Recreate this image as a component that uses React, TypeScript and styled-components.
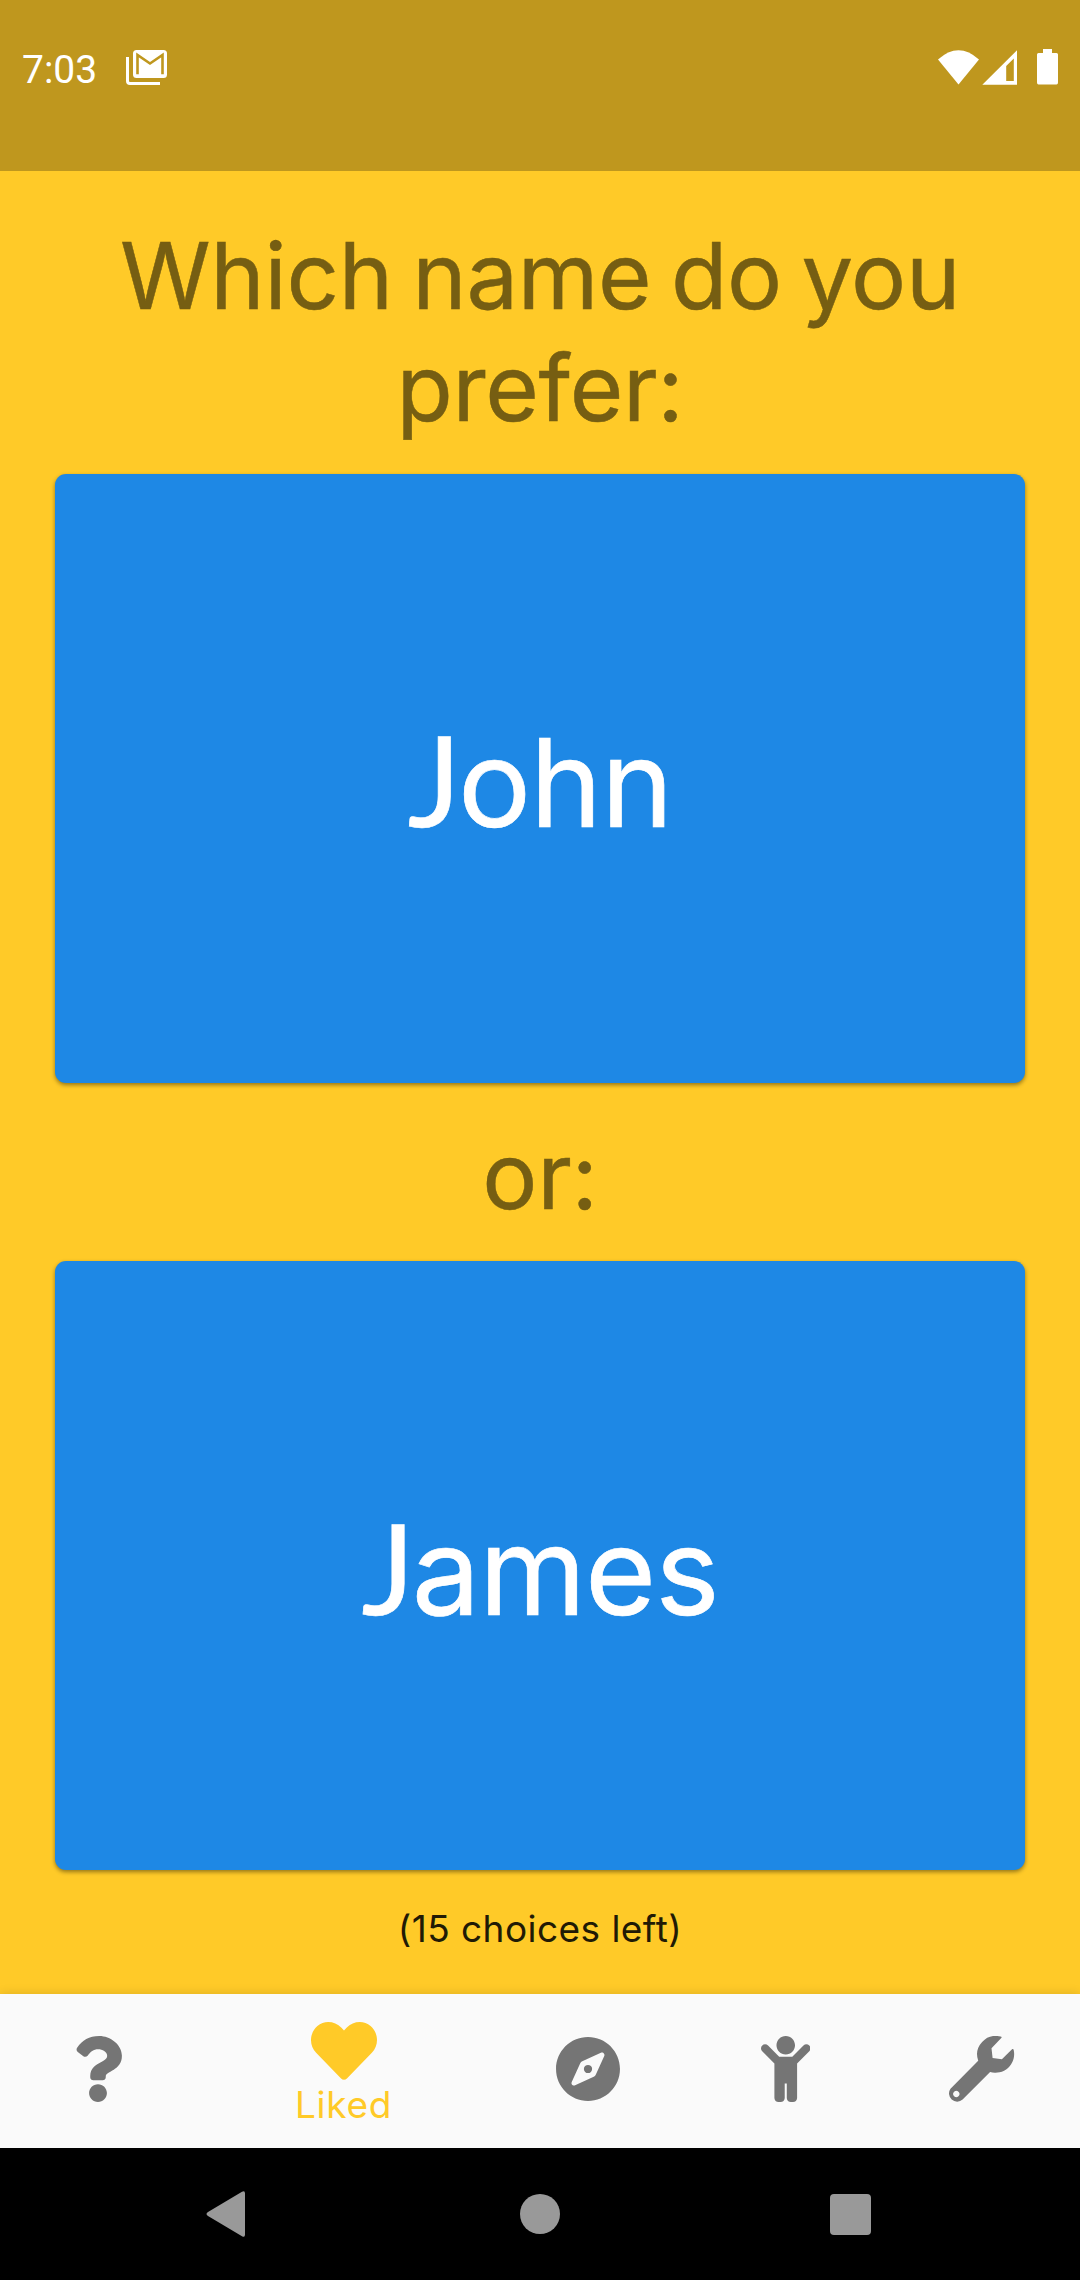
import React from "react";
import styled, { createGlobalStyle } from "styled-components";
import { FaQuestion, FaHeart, FaCompass } from "react-icons/fa";

const GlobalStyle = createGlobalStyle`
  * { box-sizing: border-box; }
  body { margin: 0; background: #000; }
`;

const Screen = styled.div`
  width: 1080px;
  height: 2280px;
  display: flex;
  flex-direction: column;
  font-family: Inter, "Liberation Sans", sans-serif;
  background: #ffca28;
  overflow: hidden;
`;

const StatusBar = styled.header`
  height: 171px;
  padding: 46px 21px 0 22px;
  display: flex;
  align-items: flex-start;
  justify-content: space-between;
  background: #bf971e;
  color: #fff;
`;

const StatusGroup = styled.div`
  display: flex;
  align-items: flex-start;
  gap: 28px;
  svg { margin-top: 4px; }
`;

const Clock = styled.span`
  width: 76px;
  padding-top: 1px;
  font: 400 39px/46px Roboto, sans-serif;
  white-space: nowrap;
`;

const Main = styled.main`
  height: 1823px;
  padding: 49px 55px 0;
  display: flex;
  flex-direction: column;
`;

const Prompt = styled.h1<{ $height: number; $top?: number }>`
  margin: 0;
  padding-top: ${(p) => p.$top ?? 0}px;
  height: ${(p) => p.$height}px;
  font-size: 92px;
  line-height: 112px;
  font-weight: 400;
  letter-spacing: -0.3px;
  word-spacing: -6px;
  text-align: center;
  color: #765e12;
  -webkit-text-stroke: 0.5px #765e12;
`;

const NameCard = styled.button`
  height: 609px;
  flex: none;
  border: 0;
  border-radius: 11px;
  padding: 6px 0 0;
  background: #1e88e5;
  color: #fff;
  font-family: inherit;
  box-shadow: 0 2px 4px rgba(0, 0, 0, 0.42);
`;

const NameText = styled.div`
  font-size: 122px;
  line-height: 150px;
  letter-spacing: -1px;
  -webkit-text-stroke: 0.7px #fff;

  &::first-letter {
    font-family: Lato, sans-serif;
    font-size: 126px;
    letter-spacing: -3px;
  }
`;

const Remaining = styled.p`
  margin: 36px 0 0;
  font-size: 37px;
  line-height: 46px;
  letter-spacing: 0.45px;
  text-align: center;
  color: #211a05;
`;

const TabBar = styled.nav`
  height: 154px;
  flex: none;
  display: grid;
  grid-template-columns: 196px 295px 194px 201px 191px;
  background: #fafafa;
  box-shadow: 0 0 10px rgba(0, 0, 0, 0.14);
`;

const Tab = styled.button<{ $active?: boolean }>`
  border: 0;
  padding: ${(p) => (p.$active ? "4px 0 0" : "0 0 4px")};
  background: none;
  display: flex;
  flex-direction: column;
  align-items: center;
  justify-content: center;
  font-family: inherit;
  color: ${(p) => (p.$active ? "#ffca28" : "#757575")};
  svg { display: block; flex: none; }
`;

const TabLabel = styled.span`
  margin-top: -2px;
  font-size: 37px;
  line-height: 46px;
  letter-spacing: 0.7px;
`;

const SystemBar = styled.footer`
  height: 132px;
  flex: none;
  display: flex;
  align-items: center;
  justify-content: space-between;
  padding: 0 209px 0 206px;
  background: #000;
`;

const MailStackIcon = () => (
  <svg width="42" height="36" viewBox="0 0 42 36" fill="none">
    <path d="M1.5 7V31a2.500 2.500 0 0 0 2.500 2.500H34" stroke="#fff" strokeWidth="3" />
    <rect x="7" y="0" width="34" height="28" rx="3.500" fill="#fff" />
    <path d="M11.500 24.300V5L24 13.500 36.500 5V24.300" stroke="#bf971e" strokeWidth="2.600" />
  </svg>
);

const SignalIcons = () => (
  <svg width="121" height="39" viewBox="0 0 121 39" fill="#fff">
    <path d="M0 13.500Q20.500 -5 41 13.500L20.500 38.500Z" />
    <path fillRule="evenodd" d="M44.300 38.700L79 4.200V38.700ZM68.200 20V35H75.800V12.500Z" />
    <path d="M105 3h9v4h4.500q1.500 0 1.500 1.500v28q0 2-1.500 2h-18q-1.500 0-1.500-2v-28q0-1.500 1.500-1.500h4.500z" />
  </svg>
);

const ChildIcon = () => (
  <svg width="49.500" height="66" viewBox="0 0 384 512" fill="currentColor">
    <path d="M120 72c0-39.765 32.235-72 72-72s72 32.235 72 72c0 39.764-32.235 72-72 72s-72-32.236-72-72zm254.627 1.373c-12.496-12.497-32.758-12.497-45.254 0L242.745 160H141.254L54.627 73.373c-12.496-12.497-32.758-12.497-45.254 0-12.497 12.497-12.497 32.758 0 45.255L104 213.254V480c0 17.673 14.327 32 32 32h16c17.673 0 32-14.327 32-32V368h16v112c0 17.673 14.327 32 32 32h16c17.673 0 32-14.327 32-32V213.254l94.627-94.627c12.497-12.496 12.497-32.757 0-45.254z" />
  </svg>
);

const WrenchIcon = () => (
  <svg width="67" height="66" viewBox="0 0 67 66" fill="currentColor">
    <path
      fillRule="evenodd"
      d="M53.500 1.700L43.500 12.300 44.600 22 53.900 23.200 64.300 13.100Q65.500 12.700 65.800 14.500A18.700 18.700 0 0 1 42.100 36L14.600 63.600A8.200 8.200 0 0 1 2.500 52.700L30.200 24.700A18.600 18.600 0 0 1 52.500.6Q54 1 53.500 1.700ZM8.300 54.800a3.200 3.200 0 1 0 .01 0Z"
    />
  </svg>
);

export default function App() {
  return (
    <>
      <GlobalStyle />
      <Screen>
        <StatusBar>
          <StatusGroup>
            <Clock>7:03</Clock>
            <MailStackIcon />
          </StatusGroup>
          <SignalIcons />
        </StatusBar>
        <Main>
          <Prompt $height={253.5}>
            Which name do you
            <br />
            prefer:
          </Prompt>
          <NameCard>
            <NameText>John</NameText>
          </NameCard>
          <Prompt as="h2" $height={178.5} $top={37}>
            or:
          </Prompt>
          <NameCard>
            <NameText>James</NameText>
          </NameCard>
          <Remaining>(15 choices left)</Remaining>
        </Main>
        <TabBar>
          <Tab aria-label="Help">
            <FaQuestion size={66} />
          </Tab>
          <Tab $active>
            <FaHeart size={66} />
            <TabLabel>Liked</TabLabel>
          </Tab>
          <Tab aria-label="Discover">
            <FaCompass size={66} />
          </Tab>
          <Tab aria-label="Names">
            <ChildIcon />
          </Tab>
          <Tab aria-label="Settings">
            <WrenchIcon />
          </Tab>
        </TabBar>
        <SystemBar>
          <svg width="44" height="46" viewBox="0 0 44 46" fill="#999">
            <path d="M36 .8Q39 -1 39 2.500V43.500Q39 47 36 45.200L2 25Q-1 23 2 21Z" />
          </svg>
          <svg width="40" height="40" viewBox="0 0 40 40" fill="#999">
            <circle cx="20" cy="20" r="20" />
          </svg>
          <svg width="41" height="41" viewBox="0 0 41 41" fill="#999">
            <rect width="41" height="41" rx="4" />
          </svg>
        </SystemBar>
      </Screen>
    </>
  );
}
